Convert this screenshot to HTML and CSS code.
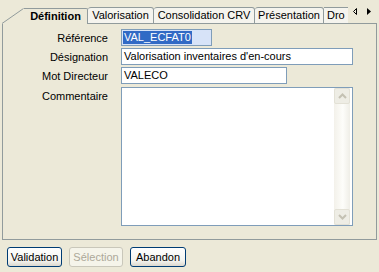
FILE: index.html
```html
<html>
  <head>
    <title>Définition</title>
    <link rel="stylesheet" href="styles.css">
  </head>
  <body>
    <div class="frame">
      <div class="tabs">
        <svg class="slant" width="22" height="24" viewBox="0 0 22 24">
          <polygon points="0,23.5 21,8 22,8 22,24 0,24" fill="#ece9d8" />
          <line x1="0" y1="23.5" x2="21.5" y2="8.5" stroke="#919b9c" stroke-width="1" />
        </svg>
        <div class="tab active">Définition</div>
        <div class="tab w-valo">Valorisation</div>
        <div class="tab w-conso">Consolidation CRV</div>
        <div class="tab w-pres">Présentation</div>
        <div class="tab w-dro clipped">Dro</div>
        <div class="scroller">
          <svg width="29" height="23" viewBox="0 0 29 23">
            <polygon points="8.5,8.5 5.5,11.5 8.5,14.5" fill="none" stroke="#000" stroke-width="1" />
            <polygon points="19,8 23,11.5 19,15" fill="#000" />
          </svg>
        </div>
      </div>
      <div class="panel">
        <div class="form">
          <label class="lbl">Référence</label>
          <div class="field focus w-ref"><span class="hl">VAL_ECFAT0</span></div>

          <label class="lbl">Désignation</label>
          <div class="field w-long">Valorisation inventaires d'en-cours</div>

          <label class="lbl">Mot Directeur</label>
          <div class="field w-mot">VALECO</div>

          <label class="lbl top">Commentaire</label>
          <div class="memo w-long">
            <div class="vscroll">
              <div class="sbtn">
                <svg width="9" height="6" viewBox="0 0 9 6"><polyline points="1,5 4.5,1.5 8,5" fill="none" stroke="#c4c1b3" stroke-width="2" /></svg>
              </div>
              <div class="track"></div>
              <div class="sbtn">
                <svg width="9" height="6" viewBox="0 0 9 6"><polyline points="1,1 4.5,4.5 8,1" fill="none" stroke="#c4c1b3" stroke-width="2" /></svg>
              </div>
            </div>
          </div>
        </div>
      </div>
    </div>
    <div class="buttons">
      <button class="btn w-val">Validation</button>
      <button class="btn w-sel" disabled>Sélection</button>
      <button class="btn w-aba">Abandon</button>
    </div>
  </body>
</html>
```

FILE: styles.css
```css
body {
  margin: 0;
  background-color: #ece9d8;
  color: #000000;
  font-family: "Liberation Sans", Arial, sans-serif;
  font-size: 11px;
  width: 379px;
  height: 272px;
  overflow: hidden;
}
.frame {
  padding-left: 2px;
  width: 375px;
}
.tabs {
  display: flex;
  align-items: flex-end;
  height: 24px;
}
.slant {
  display: block;
  flex: none;
}
.tab {
  flex: none;
  box-sizing: border-box;
  height: 17px;
  line-height: 15px;
  text-align: center;
  white-space: nowrap;
  overflow: hidden;
  background: #f5f4ee;
  border-top: 1px solid #919b9c;
  border-right: 1px solid #919b9c;
  border-bottom: 1px solid #919b9c;
  border-radius: 3px 3px 0 0;
}
.tab.active {
  width: 64px;
  height: 16px;
  line-height: 15px;
  font-weight: bold;
  background: #ece9d8;
  border-bottom: none;
  border-radius: 0 2px 0 0;
}
.w-valo {
  width: 66px;
}
.w-conso {
  width: 101px;
}
.w-pres {
  width: 69px;
}
.w-dro {
  width: 24px;
  text-align: left;
  padding-left: 3px;
  border-right: none;
  border-radius: 0;
}
.scroller {
  flex: none;
  width: 29px;
  height: 24px;
  box-sizing: border-box;
  border-bottom: 1px solid #919b9c;
}
.scroller svg {
  display: block;
}
.panel {
  box-sizing: border-box;
  height: 216px;
  border-left: 1px solid #919b9c;
  border-right: 1px solid #919b9c;
  border-bottom: 1px solid #919b9c;
  padding-top: 5px;
}
.form {
  display: grid;
  grid-template-columns: 105px auto;
  column-gap: 13px;
  row-gap: 2px;
  align-items: center;
}
.lbl {
  text-align: right;
  white-space: nowrap;
}
.lbl.top {
  align-self: start;
  padding-top: 4px;
}
.field {
  box-sizing: border-box;
  height: 17px;
  line-height: 15px;
  border: 1px solid #7f9db9;
  background: #ffffff;
  padding: 0 2px;
  white-space: nowrap;
}
.field.focus {
  background: #d7e3f8;
  padding: 0 1px;
}
.hl {
  background: #316ac5;
  color: #ffffff;
  padding: 0 1px;
  display: inline-block;
  line-height: 13px;
  margin-top: 1px;
}
.w-ref {
  width: 91px;
}
.w-long {
  width: 232px;
}
.w-mot {
  width: 166px;
}
.memo {
  box-sizing: border-box;
  height: 139px;
  margin-top: 1px;
  border: 1px solid #7f9db9;
  background: #ffffff;
  display: flex;
  justify-content: flex-end;
  padding-right: 2px;
}
.vscroll {
  width: 16px;
  display: flex;
  flex-direction: column;
  background: linear-gradient(to right, #f3f1ea, #fdfdfa 55%, #efeee7);
}
.track {
  flex: 1;
}
.sbtn {
  box-sizing: border-box;
  height: 16px;
  border: 1px solid #e3e1d6;
  border-radius: 2px;
  background: #eeede5;
  display: flex;
  align-items: center;
  justify-content: center;
}
.sbtn svg {
  display: block;
}
.buttons {
  display: flex;
  gap: 7px;
  padding: 7px 0 0 7px;
}
.btn {
  box-sizing: border-box;
  height: 20px;
  padding: 0;
  font-family: "Liberation Sans", Arial, sans-serif;
  font-size: 11px;
  color: #000000;
  border: 1px solid #003c74;
  border-radius: 3px;
  background: linear-gradient(#ffffff, #f4f4f0 70%, #dcd8ce);
}
.btn:disabled {
  color: #aca899;
  border-color: #c9c7ba;
  background: #f5f4ea;
}
.w-val {
  width: 55px;
}
.w-sel {
  width: 54px;
}
.w-aba {
  width: 56px;
}
```
